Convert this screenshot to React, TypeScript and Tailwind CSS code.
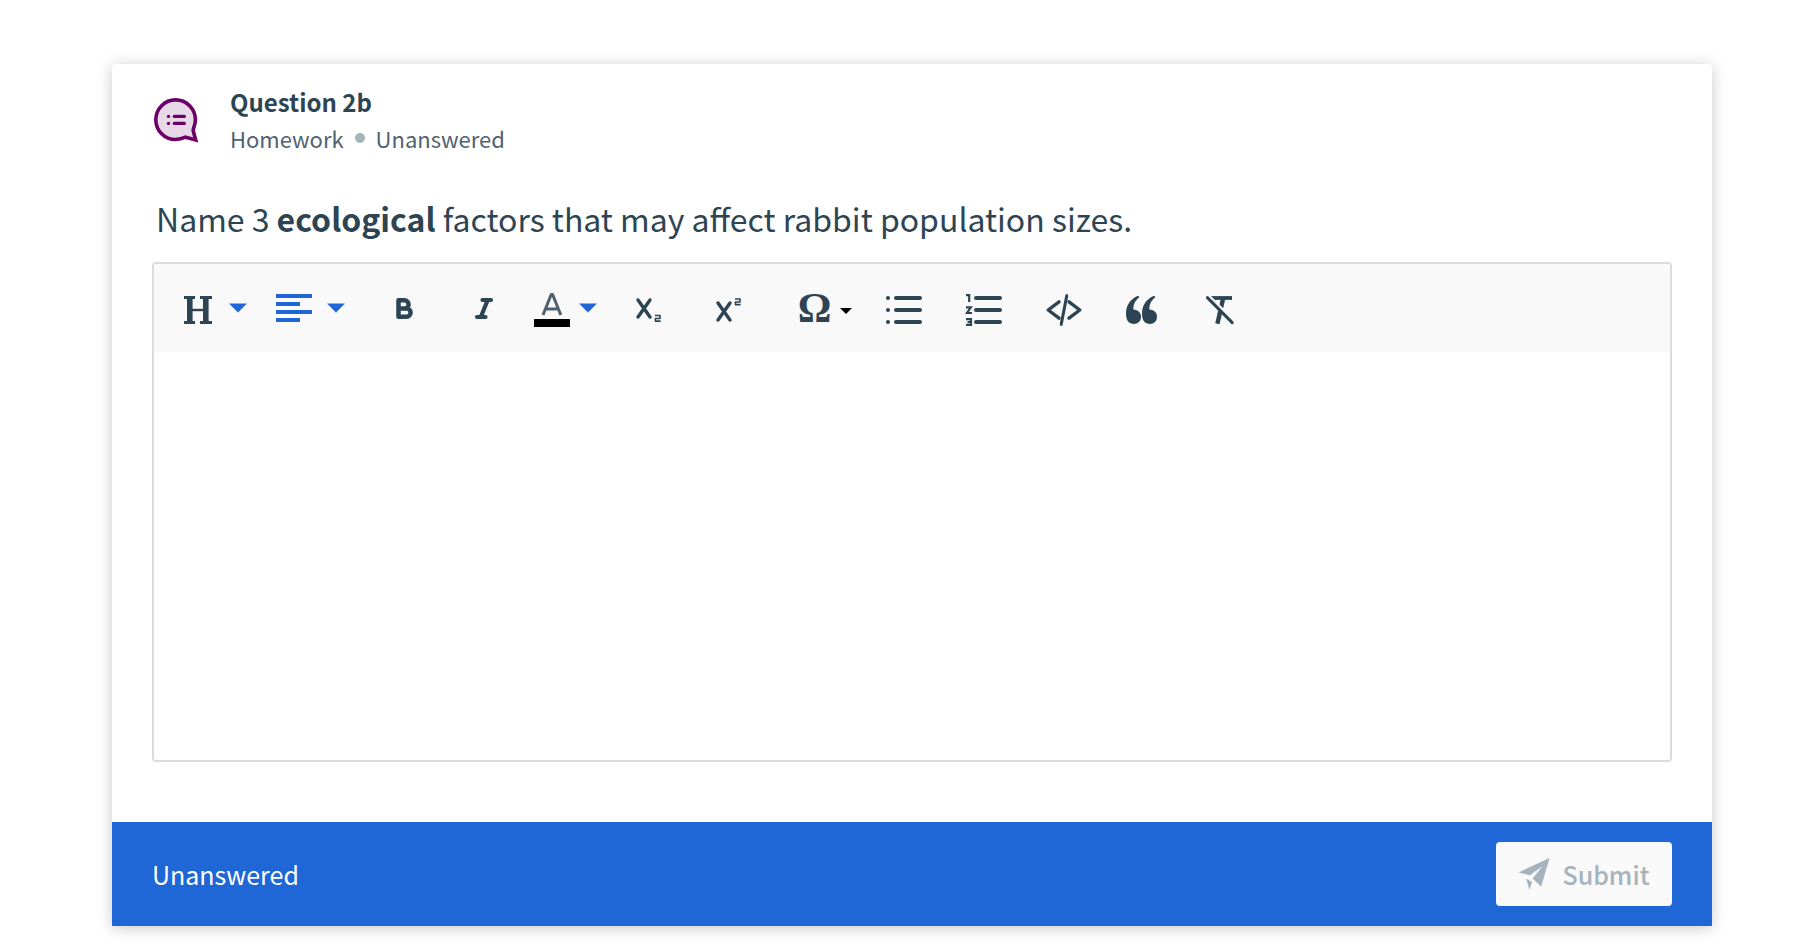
import { useState } from 'react';
import type { ReactNode } from 'react';

interface ToolButtonProps {
  label: string;
  children: ReactNode;
}

function ToolButton({ label, children }: ToolButtonProps) {
  return (
    <button type="button" aria-label={label} title={label} className="h-12 w-20 text-[#2d4553] cursor-pointer">
      <svg viewBox="0 0 80 48" className="h-12 w-20" fill="none" stroke="currentColor" aria-hidden="true">
        {children}
      </svg>
    </button>
  );
}

function QuestionIcon() {
  return (
    <svg viewBox="0 0 48 48" className="h-12 w-12 shrink-0" fill="none" stroke="#6b0068" aria-hidden="true">
      <path
        d="M43.4 23.7A19.8 19.8 0 1 0 23.6 43.5C27.6 43.5 30.5 42.6 33.5 41.2L43.7 43.9L41.2 34.8C41.2 31.2 43.4 29.6 43.4 23.7Z"
        fill="#e8d9e8"
        strokeWidth="3.6"
      />
      <path d="M22.3 20.4h10M22.3 27.4h10M16.5 20.4h.01M16.5 27.4h.01" strokeWidth="3.4" strokeLinecap="round" />
    </svg>
  );
}

function Toolbar() {
  return (
    <div role="toolbar" aria-label="Formatting" className="flex flex-wrap items-center gap-x-4 bg-[#f9f9f9] px-5 py-5 rounded-t-lg">
      <ToolButton label="Heading">
        <path d="M10 13.5h11M26 13.5h12M10 38.5h11M26 38.5h12" strokeWidth="3" />
        <path d="M15.8 13v26M31.8 13v26" strokeWidth="5.6" />
        <path d="M16 26h16" strokeWidth="2.4" />
        <path d="M55 19.5h18l-9 9z" fill="#1f66d6" stroke="none" />
      </ToolButton>
      <ToolButton label="Align">
        <path d="M6 12h36M6 20h24M6 28h36M6 36h24" stroke="#1f66d6" strokeWidth="4" />
        <path d="M57 19.5h18l-9 9z" fill="#1f66d6" stroke="none" />
      </ToolButton>
      <div className="flex">
        <ToolButton label="Bold">
          <path
            d="M32.5 16.3h6a4 4 0 0 1 0 8.2h-6zM32.5 24.5h8a4.1 4.1 0 0 1 0 8.2h-8z"
            strokeWidth="4.5"
            strokeLinejoin="round"
          />
        </ToolButton>
        <ToolButton label="Italic">
          <path d="M36.5 16h8.5M31 33h8.5M41.5 16.5L35 32.5" strokeWidth="4.2" strokeLinecap="round" />
        </ToolButton>
        <ToolButton label="Text color">
          <path d="M17 31l8.2-20.5h1.4L34.8 31M20 25h12" stroke="#4f616d" strokeWidth="3" strokeLinejoin="round" />
          <path d="M8 39h36" stroke="#000000" strokeWidth="8" />
          <path d="M53 19.5h18l-9 9z" fill="#1f66d6" stroke="none" />
        </ToolButton>
        <ToolButton label="Subscript">
          <path d="M32 16l12 17M44 16L32 33" strokeWidth="3.4" strokeLinecap="round" />
          <path d="M49 31.5h5v3h-4.6v2.6h5.2" strokeWidth="1.6" strokeLinejoin="round" />
        </ToolButton>
        <ToolButton label="Superscript">
          <path d="M32 19l12 17M44 19L32 36" strokeWidth="3.4" strokeLinecap="round" />
          <path d="M49 15h5v3h-4.6v2.6h5.2" strokeWidth="1.6" strokeLinejoin="round" />
        </ToolButton>
      </div>
      <div className="flex">
        <ToolButton label="Special characters">
          <text
            x="32.5"
            y="38"
            textAnchor="middle"
            className="font-['Liberation_Serif',serif] text-[42px] font-bold"
            fill="currentColor"
            stroke="none"
          >
            Ω
          </text>
          <path d="M58 24h12l-6 6z" fill="#000000" stroke="none" />
        </ToolButton>
        <ToolButton label="Bulleted list">
          <path d="M34 14h24M34 26h24M34 38h24M26 14h.01M26 26h.01M26 38h.01" strokeWidth="4" strokeLinecap="round" />
        </ToolButton>
        <ToolButton label="Numbered list">
          <path d="M34 14h24M34 26h24M34 38h24" strokeWidth="4" strokeLinecap="round" />
          <path d="M24 11.2h3.2V18M24 23.3h4.8L25 29h5M24 35.2h5v5.6h-5M25.5 38H29" strokeWidth="2.2" />
        </ToolButton>
        <ToolButton label="Code">
          <path d="M37 17.8L26.2 26L37 34.2M47 17.8L57.8 26L47 34.2" strokeWidth="3.4" strokeLinecap="round" strokeLinejoin="round" />
          <path d="M44.8 11.6l-5.6 28.8" strokeWidth="3" strokeLinecap="round" />
        </ToolButton>
        <ToolButton label="Quote">
          <path
            d="M35 12.3C28 15.5 24 22 24 29.5C24 36.5 27 40 31.8 40C36 40 39 37 39 32.8C39 28.5 36 25.8 31.5 25.8C31 21 33 17 37 13.6C37.6 12.3 36.4 11.7 35 12.3ZM51 12.3C44 15.5 40 22 40 29.5C40 36.5 43 40 47.8 40C52 40 55 37 55 32.8C55 28.5 52 25.8 47.5 25.8C47 21 49 17 53 13.6C53.6 12.3 52.4 11.7 51 12.3Z"
            fill="currentColor"
            stroke="none"
          />
        </ToolButton>
        <ToolButton label="Clear formatting">
          <path d="M29 14h21" strokeWidth="3.8" />
          <path d="M41 15l-5.6 24.8" strokeWidth="4.4" />
          <path d="M27 12.5l24 24" stroke="#f9f9f9" strokeWidth="3.4" />
          <path d="M25.4 13.6l24.8 25" strokeWidth="3" strokeLinecap="round" />
        </ToolButton>
      </div>
    </div>
  );
}

function App() {
  const [answer, setAnswer] = useState('');

  return (
    <div className="bg-white pt-16 pb-[18px] pl-28 pr-[94px] font-['Noto_Sans_CJK_SC','Source_Sans_Pro',sans-serif] text-[#2d4553]">
      <main className="rounded-t bg-white shadow-[0_2px_16px_rgba(0,0,0,0.22)]">
        <div className="px-10 pt-5 pb-[60px]">
          <header className="flex items-center gap-[30px]">
            <QuestionIcon />
            <div>
              <h1 className="text-[24px] leading-9 font-bold">Question 2b</h1>
              <div className="flex items-center text-[22px] leading-9 text-[#51626f]">
                <span>Homework</span>
                <span className="mx-[11px] h-[10px] w-[10px] rounded-full bg-[#a5b3bd]" />
                <span>Unanswered</span>
              </div>
            </div>
          </header>
          <p id="prompt" className="mt-[38px] mb-5 px-1 text-[32px] leading-[48px]">
            Name 3 <strong className="font-bold">ecological</strong> factors that may affect rabbit population sizes.
          </p>
          <div className="rounded border-2 border-[#d8dde1]">
            <Toolbar />
            <textarea
              aria-labelledby="prompt"
              value={answer}
              onChange={(e) => setAnswer(e.target.value)}
              className="block h-[408px] w-full resize-none px-5 py-4 text-[24px] outline-none"
            />
          </div>
        </div>
        <footer className="flex items-center justify-between bg-[#1f66d6] px-10 py-5">
          <span className="text-[25px] leading-9 text-white">Unanswered</span>
          <button
            type="button"
            disabled={!answer}
            className="flex h-16 w-44 items-center justify-center gap-3 rounded bg-[#f9f9f9] text-[25px] leading-9 font-medium text-[#a5b3bd]"
          >
            <svg viewBox="0 0 32 32" className="h-8 w-8 shrink-0" fill="currentColor" aria-hidden="true">
              <path d="M31.6 0L0.5 14.4L11.8 17.2L24.5 8.2L14.6 20.4L23.2 28.4Z" />
              <path d="M8.2 20.6L14 24L11.4 32Z" />
            </svg>
            Submit
          </button>
        </footer>
      </main>
    </div>
  );
}

export default App;
